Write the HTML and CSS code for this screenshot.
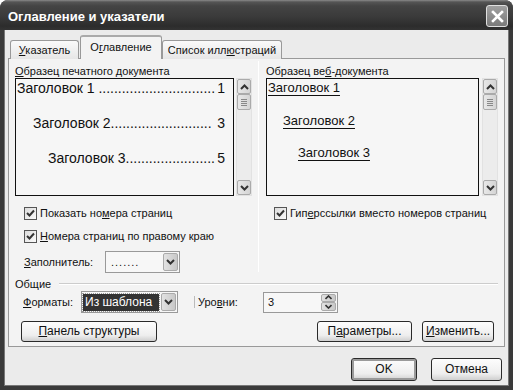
FILE: index.html
```html
<!DOCTYPE html>
<html lang="ru">
<head>
	<meta charset="UTF-8">
	<title>Оглавление и указатели</title>
	<link rel="stylesheet" href="styles.css">
</head>
<body>
	<div class="window">
		<div class="titlebar">
			<span class="title">Оглавление и указатели</span>
			<div class="close">
				<svg width="13" height="13" viewBox="0 0 13 13"><path d="M2 2 L11 11 M11 2 L2 11" stroke="#fff" stroke-width="2.6" stroke-linecap="square"/></svg>
			</div>
		</div>
		<div class="client">
			<div class="tabs">
				<div class="tab t1"><u>У</u>казатель</div>
				<div class="tab t2 active">О<u>г</u>лавление</div>
				<div class="tab t3">Список илл<u>ю</u>страций</div>
			</div>
			<div class="panel">
				<div class="top">
					<div class="col left">
						<div class="label"><u>О</u>бразец печатного документа</div>
						<div class="preview-row">
							<div class="preview print">
								<div class="line l1"><span>Заголовок 1 ..............................</span><span>1</span></div>
								<div class="line l2"><span>Заголовок 2..........................</span><span>3</span></div>
								<div class="line l3"><span>Заголовок 3.......................</span><span>5</span></div>
							</div>
							<div class="scrollbar">
								<div class="sbtn"><svg width="9" height="6" viewBox="0 0 9 6"><path d="M1 5 L4.5 1.5 L8 5" fill="none" stroke="#333" stroke-width="2"/></svg></div>
								<div class="thumb"><i></i><i></i><i></i><i></i></div>
								<div class="track"></div>
								<div class="sbtn"><svg width="9" height="6" viewBox="0 0 9 6"><path d="M1 1 L4.5 4.5 L8 1" fill="none" stroke="#333" stroke-width="2"/></svg></div>
							</div>
						</div>
						<div class="check c1">
							<div class="box"><svg width="9" height="9" viewBox="0 0 9 9"><path d="M1 4 L3.5 6.5 L8 1.5" fill="none" stroke="#333" stroke-width="2"/></svg></div>
							<span>Показать но<u>м</u>ера страниц</span>
						</div>
						<div class="check c2">
							<div class="box"><svg width="9" height="9" viewBox="0 0 9 9"><path d="M1 4 L3.5 6.5 L8 1.5" fill="none" stroke="#333" stroke-width="2"/></svg></div>
							<span><u>Н</u>омера страниц по правому краю</span>
						</div>
						<div class="fill-row">
							<span class="fill-label"><u>З</u>аполнитель:</span>
							<div class="combo fill-combo">
								<span class="combo-text">.......</span>
								<div class="drop"><svg width="9" height="6" viewBox="0 0 9 6"><path d="M1 1 L4.5 4.5 L8 1" fill="none" stroke="#333" stroke-width="2"/></svg></div>
							</div>
						</div>
					</div>
					<div class="sep"></div>
					<div class="col right">
						<div class="label">Образец ве<u>б</u>-документа</div>
						<div class="preview-row">
							<div class="preview web">
								<div class="wline w1"><u>Заголовок 1</u></div>
								<div class="wline w2"><u>Заголовок 2</u></div>
								<div class="wline w3"><u>Заголовок 3</u></div>
							</div>
							<div class="scrollbar">
								<div class="sbtn"><svg width="9" height="6" viewBox="0 0 9 6"><path d="M1 5 L4.5 1.5 L8 5" fill="none" stroke="#333" stroke-width="2"/></svg></div>
								<div class="thumb"><i></i><i></i><i></i><i></i></div>
								<div class="track"></div>
								<div class="sbtn"><svg width="9" height="6" viewBox="0 0 9 6"><path d="M1 1 L4.5 4.5 L8 1" fill="none" stroke="#333" stroke-width="2"/></svg></div>
							</div>
						</div>
						<div class="check c1 web-check">
							<div class="box"><svg width="9" height="9" viewBox="0 0 9 9"><path d="M1 4 L3.5 6.5 L8 1.5" fill="none" stroke="#333" stroke-width="2"/></svg></div>
							<span>Гип<u>е</u>рссылки вместо номеров страниц</span>
						</div>
					</div>
				</div>
				<div class="group-title"><span>Общие</span><div class="hline"></div></div>
				<div class="form-row">
					<span class="fmt-label"><u>Ф</u>орматы:</span>
					<div class="combo fmt-combo">
						<span class="combo-text selected">Из шаблона</span>
						<div class="drop"><svg width="9" height="6" viewBox="0 0 9 6"><path d="M1 1 L4.5 4.5 L8 1" fill="none" stroke="#333" stroke-width="2"/></svg></div>
					</div>
					<span class="lvl-label">Уро<u>в</u>ни:</span>
					<div class="spin">
						<span>3</span>
						<div class="spin-btns">
							<div class="sp"><svg width="7" height="5" viewBox="0 0 7 5"><path d="M0.5 4 L3.5 1 L6.5 4" fill="none" stroke="#333" stroke-width="1.6"/></svg></div>
							<div class="sp"><svg width="7" height="5" viewBox="0 0 7 5"><path d="M0.5 1 L3.5 4 L6.5 1" fill="none" stroke="#333" stroke-width="1.6"/></svg></div>
						</div>
					</div>
				</div>
				<div class="btn-row">
					<div class="btn b-panel"><u>П</u>анель структуры</div>
					<div class="spacer"></div>
					<div class="btn b-param">П<u>а</u>раметры...</div>
					<div class="btn b-edit"><u>И</u>зменить...</div>
				</div>
			</div>
			<div class="footer">
				<div class="btn b-ok">OK</div>
				<div class="btn b-cancel">Отмена</div>
			</div>
		</div>
	</div>
</body>
</html>
```

FILE: styles.css
```css
body{
	margin: 0;
	padding: 0;
	background: #fff;
	font-family: "Liberation Sans", Arial, sans-serif;
	font-size: 11px;
	color: #111;
}
u{ text-decoration: underline; text-underline-offset: 1px; }
.window{
	width: 513px;
	height: 390px;
	background: #3a3a3a;
	border-radius: 8px 8px 0 0;
	overflow: hidden;
	display: flex;
	flex-direction: column;
}
.titlebar{
	height: 30px;
	flex: none;
	display: flex;
	align-items: center;
	padding: 0 5px 0 8px;
	background: linear-gradient(#8a8a8a 0, #555 2px, #444 6px, #3b3b3b 16px, #2c2c2c 26px, #333 30px);
}
.title{
	flex: 1;
	color: #fff;
	font-size: 13px;
	font-weight: bold;
	margin-top: 2px;
}
.close{
	width: 20px;
	height: 20px;
	margin-top: 2px;
	border: 1px solid #e0e0e0;
	border-radius: 3px;
	background: linear-gradient(#a0a0a0, #7a7a7a);
	display: flex;
	align-items: center;
	justify-content: center;
}
.client{
	flex: 1;
	margin: 0 4px 4px;
	background: #ebebeb;
	box-shadow: inset 1px 0 0 #777, inset -1px 0 0 #777, inset 0 -1px 0 #777;
	padding: 6px 4px 0;
	display: flex;
	flex-direction: column;
}
.tabs{
	display: flex;
	align-items: flex-end;
	padding-left: 2px;
	height: 23px;
	position: relative;
	z-index: 1;
	margin-bottom: -1px;
}
.tab{
	height: 19px;
	box-sizing: border-box;
	border: 1px solid #999;
	border-bottom: none;
	border-radius: 3px 3px 0 0;
	background: linear-gradient(#fafafa, #e6e6e6);
	text-align: center;
	line-height: 18px;
	white-space: nowrap;
}
.t1{ width: 69px; margin-right: 1px; }
.t2{ width: 82px; }
.t3{ width: 120px; }
.tab.active{
	height: 24px;
	background: #f3f3f3;
	border-top: 2px solid #aaa;
	line-height: 20px;
}
.panel{
	width: 497px;
	height: 289px;
	box-sizing: border-box;
	border: 1px solid #999;
	background: #f3f3f3;
	padding: 5px 6px 0 6px;
	display: flex;
	flex-direction: column;
}
.top{
	display: flex;
	height: 208px;
}
.col.left{ width: 237px; }
.col.right{ width: 232px; }
.sep{
	width: 1px;
	margin: -3px 7px 0 6px;
	border-right: 1px solid #fff;
	background: #a8a8a8;
}
.label{
	height: 14px;
	line-height: 14px;
	white-space: nowrap;
}
.preview-row{
	display: flex;
	height: 118px;
}
.preview{
	box-sizing: border-box;
	border: 1px solid #111;
	background: #f6f6f6;
	font-size: 14px;
	overflow: hidden;
}
.preview.print{ width: 219px; margin-right: 2px; padding-right: 8px; }
.preview.web{ width: 213px; margin-right: 3px; font-size: 13px; }
.line{
	display: flex;
	justify-content: space-between;
	white-space: nowrap;
	height: 18px;
	line-height: 18px;
}
.l1{ margin: 0 0 0 1px; }
.l2{ margin: 17px 0 0 17px; }
.l3{ margin: 17px 0 0 32px; }
.wline{
	height: 18px;
	line-height: 18px;
	white-space: nowrap;
}
.wline u{ text-underline-offset: 3px; }
.w1{ margin-left: 1px; }
.w2{ margin: 15px 0 0 16px; }
.w3{ margin: 14px 0 0 31px; }
.scrollbar{
	width: 16px;
	display: flex;
	flex-direction: column;
	background: #ececec;
	border: 1px solid #e2e2e2;
	box-sizing: border-box;
}
.sbtn, .thumb{
	height: 15px;
	box-sizing: border-box;
	border: 1px solid #aaa;
	border-radius: 2px;
	background: linear-gradient(90deg, #e8e8e8, #d4d4d4);
	display: flex;
	align-items: center;
	justify-content: center;
}
.thumb{
	flex-direction: column;
	gap: 1px;
	height: 16px;
}
.thumb i{
	display: block;
	width: 6px;
	height: 1px;
	background: #888;
}
.track{ flex: 1; }
.check{
	display: flex;
	align-items: center;
	height: 16px;
	padding-left: 9px;
	white-space: nowrap;
}
.c1{ margin-top: 9px; }
.c2{ margin-top: 7px; }
.web-check{ padding-left: 8px; }
.box{
	width: 13px;
	height: 13px;
	box-sizing: border-box;
	border: 1px solid #555;
	background: linear-gradient(135deg, #dcdcdc, #fafafa);
	margin-right: 3px;
	display: flex;
	align-items: center;
	justify-content: center;
}
.fill-row{
	display: flex;
	align-items: center;
	margin-top: 7px;
	padding-left: 9px;
}
.fill-label{ width: 81px; }
.combo{
	height: 22px;
	box-sizing: border-box;
	border: 1px solid #999;
	background: #f7f7f7;
	display: flex;
	align-items: center;
	padding: 1px;
}
.fill-combo{ width: 75px; }
.combo-text{
	flex: 1;
	padding-left: 4px;
	letter-spacing: 1px;
}
.drop{
	width: 15px;
	height: 18px;
	box-sizing: border-box;
	border: 1px solid #aaa;
	border-radius: 2px;
	background: linear-gradient(90deg, #e2e2e2, #c8c8c8);
	display: flex;
	align-items: center;
	justify-content: center;
}
.group-title{
	display: flex;
	align-items: center;
	height: 14px;
	margin-top: 5px;
}
.hline{
	flex: 1;
	margin-left: 8px;
	height: 1px;
	background: #ccc;
	border-bottom: 1px solid #fff;
}
.form-row{
	display: flex;
	align-items: center;
	height: 22px;
	padding-left: 8px;
}
.fmt-label{ width: 58px; }
.fmt-combo{ width: 97px; }
.combo-text.selected{
	background: #333;
	color: #fff;
	letter-spacing: 0;
	height: 17px;
	line-height: 17px;
	outline: 1px dotted #999;
	margin-right: 2px;
	padding-left: 2px;
	font-size: 12px;
}
.lvl-label{
	margin-left: 16px;
	padding-left: 3px;
	border-left: 1px solid #bbb;
	width: 65px;
	line-height: 12px;
}
.spin{
	width: 75px;
	height: 21px;
	box-sizing: border-box;
	border: 1px solid #999;
	background: #f7f7f7;
	display: flex;
	align-items: center;
	padding: 1px 1px 1px 4px;
}
.spin span{ flex: 1; }
.spin-btns{
	width: 15px;
	height: 17px;
	display: flex;
	flex-direction: column;
}
.sp{
	flex: 1;
	box-sizing: border-box;
	border: 1px solid #aaa;
	border-radius: 2px;
	background: linear-gradient(90deg, #e2e2e2, #c8c8c8);
	display: flex;
	align-items: center;
	justify-content: center;
}
.btn-row{
	display: flex;
	margin-top: 8px;
	padding-left: 6px;
	padding-right: 4px;
}
.spacer{ flex: 1; }
.btn{
	height: 21px;
	box-sizing: border-box;
	border: 1px solid #2a2a2a;
	border-radius: 3px;
	background: linear-gradient(#fdfdfd, #eeeeee 70%, #cfcfcf);
	text-align: center;
	line-height: 19px;
	white-space: nowrap;
	font-size: 12px;
}
.b-panel{ width: 136px; }
.b-param{ width: 95px; margin-right: 10px; }
.b-edit{ width: 72px; }
.footer{
	display: flex;
	justify-content: flex-end;
	margin-top: 11px;
	padding-right: 3px;
}
.footer .btn{
	height: 23px;
	line-height: 21px;
}
.b-ok{
	width: 66px;
	margin-right: 14px;
	box-shadow: inset 0 0 0 2px #9a9a9a;
}
.b-cancel{ width: 71px; }
```
